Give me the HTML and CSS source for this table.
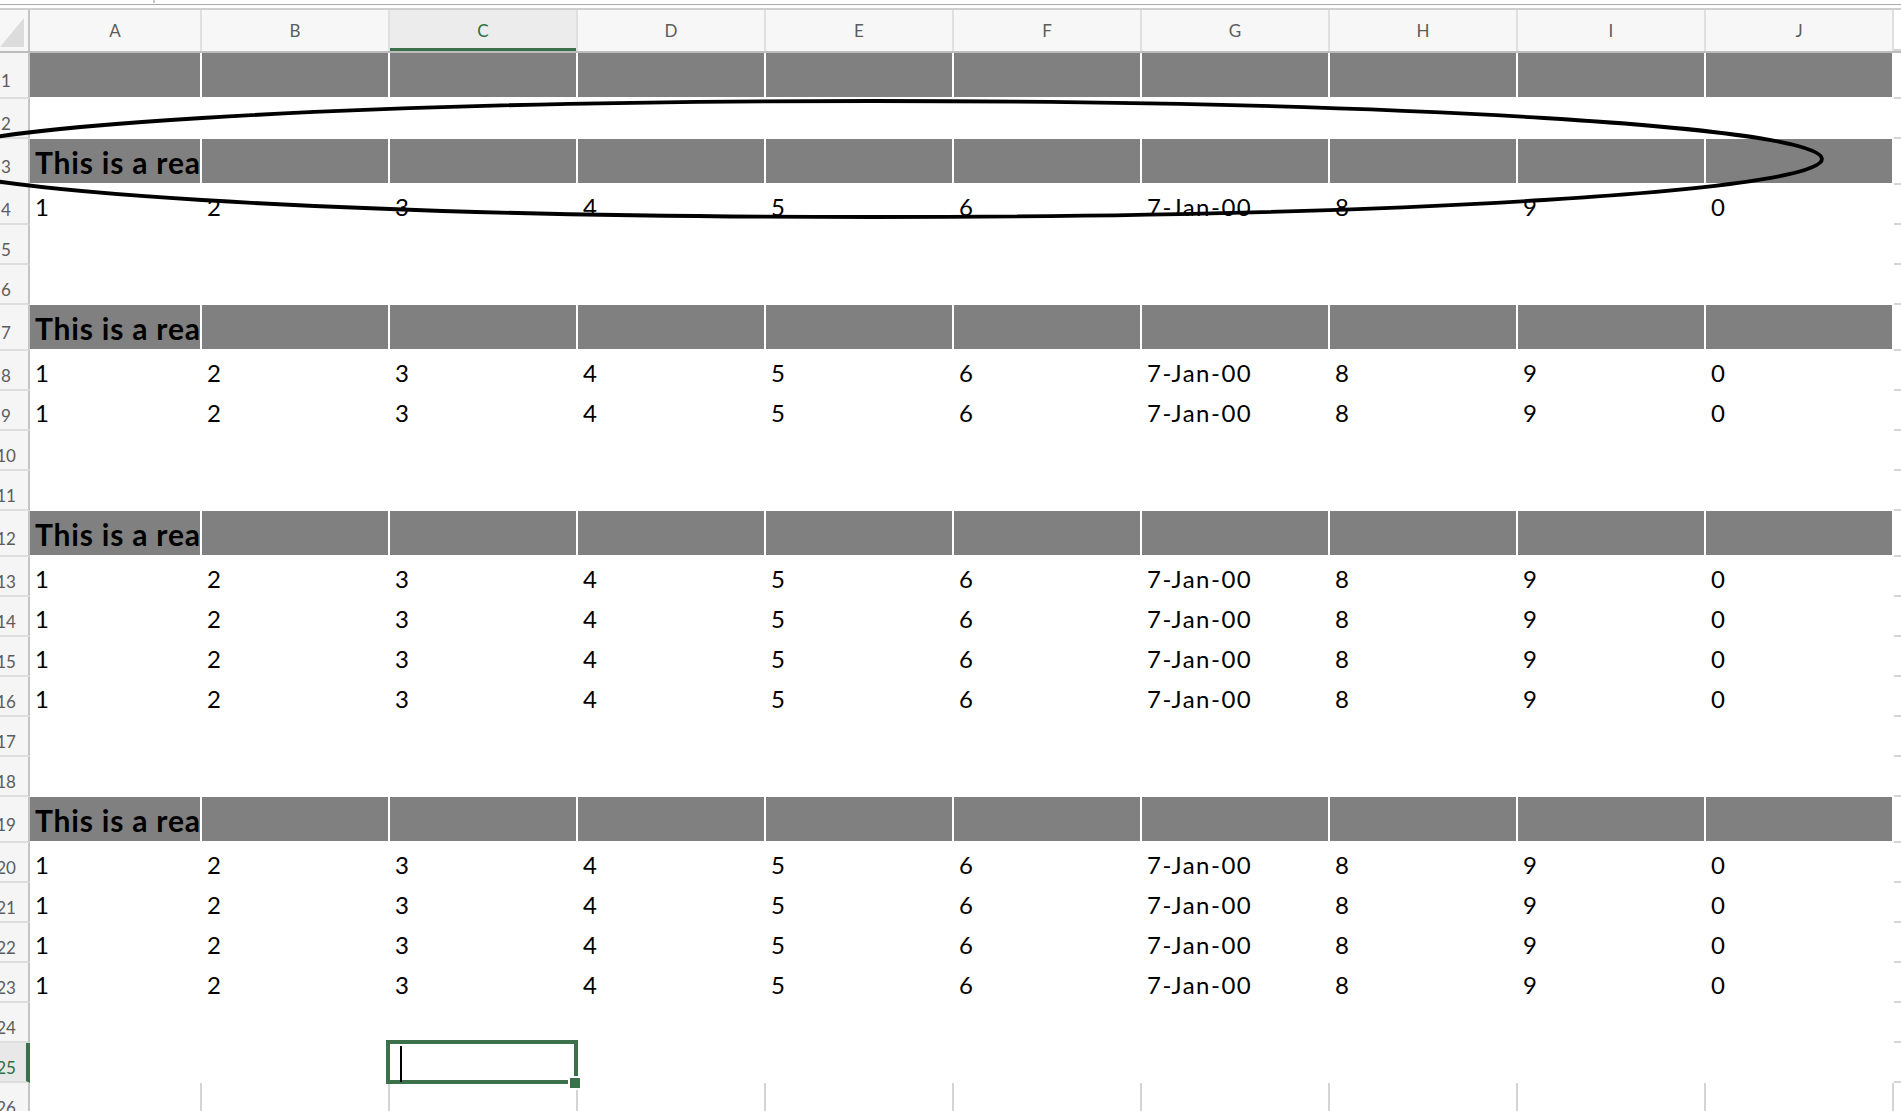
FILE: index.html
```html
<!DOCTYPE html>
<html>
<head>
<meta charset="utf-8">
<title>Sheet</title>
<link rel="stylesheet" href="styles.css">
</head>
<body>
<div class="page">
  <div class="topbar"><span class="tick"></span></div>
  <div class="sheet">
    <div class="row head">
      <div class="corner"><svg width="28" height="41" viewBox="0 0 28 41"><polygon points="0,37 24,37 24,8" fill="#dcdcdc"/></svg></div>
      <div class="ch">A</div><div class="ch">B</div><div class="ch sel">C</div><div class="ch">D</div><div class="ch">E</div>
      <div class="ch">F</div><div class="ch">G</div><div class="ch">H</div><div class="ch">I</div><div class="ch">J</div><div class="ch k"></div>
    </div>

    <div class="row tall"><div class="rh"><span>1</span></div><div class="c g"></div><div class="c g"></div><div class="c g"></div><div class="c g"></div><div class="c g"></div><div class="c g"></div><div class="c g"></div><div class="c g"></div><div class="c g"></div><div class="c g"></div><div class="k"></div></div>
    <div class="row"><div class="rh"><span>2</span></div><div class="c"></div><div class="c"></div><div class="c"></div><div class="c"></div><div class="c"></div><div class="c"></div><div class="c"></div><div class="c"></div><div class="c"></div><div class="c"></div><div class="k"></div></div>
    <div class="row tall"><div class="rh"><span>3</span></div><div class="c g h">This is a really long header</div><div class="c g"></div><div class="c g"></div><div class="c g"></div><div class="c g"></div><div class="c g"></div><div class="c g"></div><div class="c g"></div><div class="c g"></div><div class="c g"></div><div class="k"></div></div>
    <div class="row"><div class="rh"><span>4</span></div><div class="c">1</div><div class="c">2</div><div class="c">3</div><div class="c">4</div><div class="c">5</div><div class="c">6</div><div class="c">7-Jan-00</div><div class="c">8</div><div class="c">9</div><div class="c">0</div><div class="k"></div></div>
    <div class="row"><div class="rh"><span>5</span></div><div class="c"></div><div class="c"></div><div class="c"></div><div class="c"></div><div class="c"></div><div class="c"></div><div class="c"></div><div class="c"></div><div class="c"></div><div class="c"></div><div class="k"></div></div>
    <div class="row"><div class="rh"><span>6</span></div><div class="c"></div><div class="c"></div><div class="c"></div><div class="c"></div><div class="c"></div><div class="c"></div><div class="c"></div><div class="c"></div><div class="c"></div><div class="c"></div><div class="k"></div></div>
    <div class="row tall"><div class="rh"><span>7</span></div><div class="c g h">This is a really long header</div><div class="c g"></div><div class="c g"></div><div class="c g"></div><div class="c g"></div><div class="c g"></div><div class="c g"></div><div class="c g"></div><div class="c g"></div><div class="c g"></div><div class="k"></div></div>
    <div class="row"><div class="rh"><span>8</span></div><div class="c">1</div><div class="c">2</div><div class="c">3</div><div class="c">4</div><div class="c">5</div><div class="c">6</div><div class="c">7-Jan-00</div><div class="c">8</div><div class="c">9</div><div class="c">0</div><div class="k"></div></div>
    <div class="row"><div class="rh"><span>9</span></div><div class="c">1</div><div class="c">2</div><div class="c">3</div><div class="c">4</div><div class="c">5</div><div class="c">6</div><div class="c">7-Jan-00</div><div class="c">8</div><div class="c">9</div><div class="c">0</div><div class="k"></div></div>
    <div class="row"><div class="rh"><span>10</span></div><div class="c"></div><div class="c"></div><div class="c"></div><div class="c"></div><div class="c"></div><div class="c"></div><div class="c"></div><div class="c"></div><div class="c"></div><div class="c"></div><div class="k"></div></div>
    <div class="row"><div class="rh"><span>11</span></div><div class="c"></div><div class="c"></div><div class="c"></div><div class="c"></div><div class="c"></div><div class="c"></div><div class="c"></div><div class="c"></div><div class="c"></div><div class="c"></div><div class="k"></div></div>
    <div class="row tall"><div class="rh"><span>12</span></div><div class="c g h">This is a really long header</div><div class="c g"></div><div class="c g"></div><div class="c g"></div><div class="c g"></div><div class="c g"></div><div class="c g"></div><div class="c g"></div><div class="c g"></div><div class="c g"></div><div class="k"></div></div>
    <div class="row"><div class="rh"><span>13</span></div><div class="c">1</div><div class="c">2</div><div class="c">3</div><div class="c">4</div><div class="c">5</div><div class="c">6</div><div class="c">7-Jan-00</div><div class="c">8</div><div class="c">9</div><div class="c">0</div><div class="k"></div></div>
    <div class="row"><div class="rh"><span>14</span></div><div class="c">1</div><div class="c">2</div><div class="c">3</div><div class="c">4</div><div class="c">5</div><div class="c">6</div><div class="c">7-Jan-00</div><div class="c">8</div><div class="c">9</div><div class="c">0</div><div class="k"></div></div>
    <div class="row"><div class="rh"><span>15</span></div><div class="c">1</div><div class="c">2</div><div class="c">3</div><div class="c">4</div><div class="c">5</div><div class="c">6</div><div class="c">7-Jan-00</div><div class="c">8</div><div class="c">9</div><div class="c">0</div><div class="k"></div></div>
    <div class="row"><div class="rh"><span>16</span></div><div class="c">1</div><div class="c">2</div><div class="c">3</div><div class="c">4</div><div class="c">5</div><div class="c">6</div><div class="c">7-Jan-00</div><div class="c">8</div><div class="c">9</div><div class="c">0</div><div class="k"></div></div>
    <div class="row"><div class="rh"><span>17</span></div><div class="c"></div><div class="c"></div><div class="c"></div><div class="c"></div><div class="c"></div><div class="c"></div><div class="c"></div><div class="c"></div><div class="c"></div><div class="c"></div><div class="k"></div></div>
    <div class="row"><div class="rh"><span>18</span></div><div class="c"></div><div class="c"></div><div class="c"></div><div class="c"></div><div class="c"></div><div class="c"></div><div class="c"></div><div class="c"></div><div class="c"></div><div class="c"></div><div class="k"></div></div>
    <div class="row tall"><div class="rh"><span>19</span></div><div class="c g h">This is a really long header</div><div class="c g"></div><div class="c g"></div><div class="c g"></div><div class="c g"></div><div class="c g"></div><div class="c g"></div><div class="c g"></div><div class="c g"></div><div class="c g"></div><div class="k"></div></div>
    <div class="row"><div class="rh"><span>20</span></div><div class="c">1</div><div class="c">2</div><div class="c">3</div><div class="c">4</div><div class="c">5</div><div class="c">6</div><div class="c">7-Jan-00</div><div class="c">8</div><div class="c">9</div><div class="c">0</div><div class="k"></div></div>
    <div class="row"><div class="rh"><span>21</span></div><div class="c">1</div><div class="c">2</div><div class="c">3</div><div class="c">4</div><div class="c">5</div><div class="c">6</div><div class="c">7-Jan-00</div><div class="c">8</div><div class="c">9</div><div class="c">0</div><div class="k"></div></div>
    <div class="row"><div class="rh"><span>22</span></div><div class="c">1</div><div class="c">2</div><div class="c">3</div><div class="c">4</div><div class="c">5</div><div class="c">6</div><div class="c">7-Jan-00</div><div class="c">8</div><div class="c">9</div><div class="c">0</div><div class="k"></div></div>
    <div class="row"><div class="rh"><span>23</span></div><div class="c">1</div><div class="c">2</div><div class="c">3</div><div class="c">4</div><div class="c">5</div><div class="c">6</div><div class="c">7-Jan-00</div><div class="c">8</div><div class="c">9</div><div class="c">0</div><div class="k"></div></div>
    <div class="row"><div class="rh"><span>24</span></div><div class="c"></div><div class="c"></div><div class="c"></div><div class="c"></div><div class="c"></div><div class="c"></div><div class="c"></div><div class="c"></div><div class="c"></div><div class="c"></div><div class="k"></div></div>
    <div class="row"><div class="rh rsel"><span>25</span></div><div class="c"></div><div class="c"></div><div class="c active"><div class="selbox"></div><div class="handle"></div><div class="caret"></div></div><div class="c"></div><div class="c"></div><div class="c"></div><div class="c"></div><div class="c"></div><div class="c"></div><div class="c"></div><div class="k"></div></div>
    <div class="row"><div class="rh"><span>26</span></div><div class="c n"></div><div class="c n"></div><div class="c n"></div><div class="c n"></div><div class="c n"></div><div class="c n"></div><div class="c n"></div><div class="c n"></div><div class="c n"></div><div class="c n"></div><div class="k"></div></div>
  </div>
  <svg class="oval" width="1901" height="1111" viewBox="0 0 1901 1111"><ellipse cx="873" cy="159" rx="949" ry="58" fill="none" stroke="#000" stroke-width="3.8"/></svg>
</div>
</body>
</html>
```

FILE: styles.css
```css
html, body {
  margin: 0;
  padding: 0;
  background: #fff;
  overflow: hidden;
}

.page {
  position: relative;
  width: 1901px;
  height: 1111px;
  overflow: hidden;
  font-family: Lato, "Liberation Sans", sans-serif;
}

.topbar {
  position: relative;
  height: 10px;
  box-sizing: border-box;
  border-top: 4px solid #fff;
  background: linear-gradient(#a9a9a9 0 1px, #fff 1px 4px, #cfcfcf 4px 6px);
}

.tick {
  position: absolute;
  left: 153px;
  top: -4px;
  width: 2px;
  height: 3px;
  background: #c8c8c8;
}

.sheet {
  display: flex;
  flex-direction: column;
}

.row {
  display: grid;
  grid-template-columns: 30px 172px repeat(9, 188px) 7px;
  height: 40px;
}

.row.tall {
  height: 46px;
}

.row.head {
  height: 43px;
  background: #f7f7f7;
  border-bottom: 2px solid #bdbdbd;
  box-sizing: border-box;
}

.corner {
  box-sizing: border-box;
  border-right: 2px solid #c4c4c4;
  background: #f7f7f7;
}

.corner svg {
  display: block;
}

.ch {
  box-sizing: border-box;
  border-right: 2px solid #e0e0e0;
  display: flex;
  align-items: center;
  justify-content: center;
  font-size: 17px;
  color: #5c5c5c;
}

.ch.sel {
  background: #ececec;
  color: #2f6e41;
  box-shadow: inset 0 -3px 0 #3a714a;
}

.ch.k {
  border-right: none;
}

.rh {
  box-sizing: border-box;
  background: #f5f5f5;
  border-right: 2px solid #c4c4c4;
  border-bottom: 2px solid #dedede;
  overflow: hidden;
  display: flex;
  justify-content: center;
  align-items: center;
  padding: 10px 16px 0 0;
  font-size: 17px;
  color: #5c5c5c;
  white-space: nowrap;
}

.rh.rsel {
  background: #e8e8e8;
  color: #2f6e41;
  border-right: 4px solid #3a714a;
  padding-right: 14px;
}

.c {
  position: relative;
  box-sizing: border-box;
  border-right: 2px solid #fff;
  border-bottom: 2px solid #fff;
  background: #fff;
  overflow: hidden;
  white-space: nowrap;
  display: flex;
  align-items: flex-end;
  padding: 0 0 4px 5px;
  font-size: 24px;
  line-height: 24px;
  letter-spacing: 1.5px;
  color: #000;
}

.c.g {
  background: #808080;
}

.c.h {
  font-size: 30px;
  line-height: 30px;
  font-weight: 700;
  letter-spacing: 0.8px;
  padding-bottom: 6px;
}

.c.n {
  border-right-color: #d4d4d4;
  border-bottom-color: #d4d4d4;
}

.c.active {
  overflow: visible;
  z-index: 2;
}

.selbox {
  position: absolute;
  left: -4px;
  top: -3px;
  right: -2px;
  bottom: -3px;
  border: 4px solid #3a714a;
}

.handle {
  position: absolute;
  right: -4px;
  bottom: -7px;
  width: 10px;
  height: 10px;
  background: #3a714a;
  outline: 2px solid #fff;
}

.caret {
  position: absolute;
  left: 10px;
  top: 3px;
  width: 2px;
  height: 36px;
  background: #000;
}

.k {
  box-sizing: border-box;
  border-bottom: 2px solid #d4d4d4;
  background: #fff;
}

.oval {
  position: absolute;
  left: 0;
  top: 0;
  pointer-events: none;
  z-index: 5;
}
```
